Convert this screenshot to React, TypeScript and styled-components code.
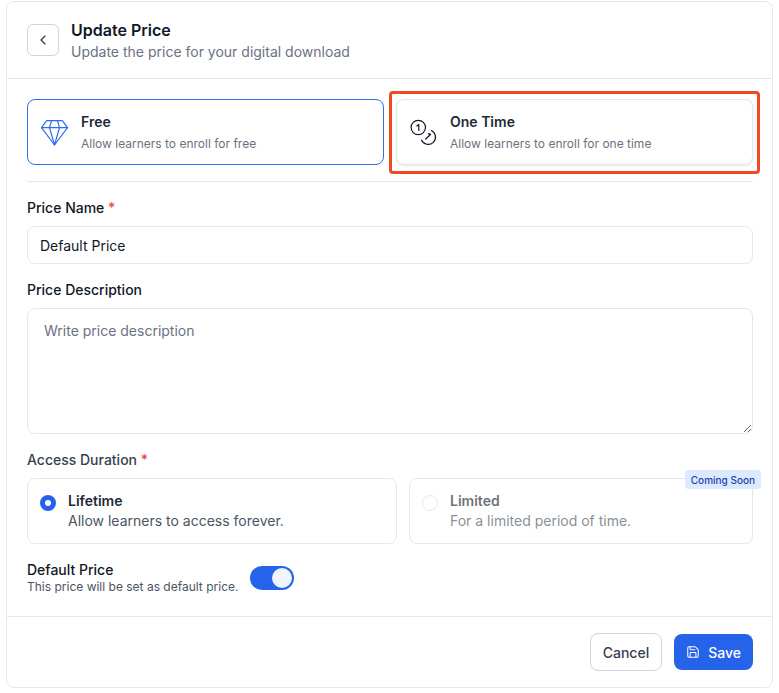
import React from "react";
import styled, { createGlobalStyle } from "styled-components";
import { ChevronLeft, Save } from "lucide-react";

const Global = createGlobalStyle`
  html, body { margin: 0; padding: 0; background: #fff; }
  * { box-sizing: border-box; }
  body { font-family: Inter, "Noto Sans", sans-serif; color: #111827; }
`;

const Page = styled.div`
  width: 779px;
  height: 693px;
  padding: 1px 6px 5px 6px;
`;

const Card = styled.div`
  width: 767px;
  height: 687px;
  border: 1px solid #e5e7eb;
  border-radius: 8px;
  background: #fff;
  display: flex;
  flex-direction: column;
`;

const Header = styled.header`
  height: 77px;
  flex: none;
  padding: 16px 20px 0;
  display: flex;
  gap: 12px;
  border-bottom: 1px solid #e5e7eb;
`;

const BackButton = styled.button`
  width: 32px;
  height: 32px;
  margin-top: 6px;
  padding: 0;
  border: 1px solid #d1d5db;
  border-radius: 6px;
  background: #fff;
  color: #374151;
  display: flex;
  align-items: center;
  justify-content: center;
`;

const HeaderText = styled.div`
  display: flex;
  flex-direction: column;
`;

const Title = styled.div`
  font-size: 16px;
  line-height: 24px;
  font-weight: 600;
  color: #111827;
`;

const Subtitle = styled.div`
  font-size: 14px;
  line-height: 20px;
  color: #6b7280;
`;

const Body = styled.div`
  flex: 1;
  padding: 20px 20px 0;
  display: flex;
  flex-direction: column;
`;

const TypeRow = styled.div`
  display: grid;
  grid-template-columns: 357px 357px;
  gap: 12px;
  padding-bottom: 16px;
  border-bottom: 1px solid #e5e7eb;
  width: 726px;
`;

const TypeCard = styled.div<{ $selected?: boolean }>`
  position: relative;
  height: 66px;
  padding: 0 13px;
  display: flex;
  align-items: center;
  gap: 12px;
  border-radius: 8px;
  background: #fff;
  border: 1px solid ${(p) => (p.$selected ? "#3070ee" : "#e5e7eb")};
  box-shadow: ${(p) => (p.$selected ? "none" : "0 1px 3px rgba(17,24,39,0.1)")};
`;

const Highlight = styled.div`
  position: absolute;
  left: -8px;
  top: -9px;
  width: 371px;
  height: 83px;
  border: 3px solid #f04a23;
  border-radius: 4px;
  pointer-events: none;
`;

const TypeIcon = styled.svg`
  flex: none;
  width: 28px;
  height: 28px;
`;

const TypeText = styled.div`
  display: flex;
  flex-direction: column;
  gap: 4px;
`;

const TypeTitle = styled.div`
  font-size: 14px;
  line-height: 20px;
  font-weight: 600;
  color: #1f2937;
`;

const TypeDesc = styled.div`
  font-size: 12px;
  line-height: 16px;
  color: #6b7280;
`;

const Label = styled.label<{ $muted?: boolean }>`
  display: block;
  font-size: 14px;
  line-height: 20px;
  font-weight: 500;
  color: ${(p) => (p.$muted ? "#374151" : "#111827")};
  margin: 16px 0 8px;
`;

const Required = styled.span`
  color: #ef4444;
`;

const TextInput = styled.input`
  display: block;
  width: 726px;
  height: 38px;
  padding: 0 12px;
  font: 400 14px Inter, sans-serif;
  color: #111827;
  border: 1px solid #e5e7eb;
  border-radius: 8px;
  outline: none;
`;

const TextArea = styled.textarea`
  display: block;
  width: 726px;
  height: 126px;
  padding: 12px 16px;
  font: 400 14px/20px Inter, sans-serif;
  border: 1px solid #e5e7eb;
  border-radius: 8px;
  outline: none;
  resize: vertical;
  &::placeholder { color: #6b7280; opacity: 1; }
`;

const DurationRow = styled.div`
  display: grid;
  grid-template-columns: 370px 344px;
  gap: 12px;
`;

const DurationCard = styled.div`
  position: relative;
  height: 66px;
  padding: 12px;
  display: flex;
  gap: 12px;
  border: 1px solid #e5e7eb;
  border-radius: 8px;
`;

const Radio = styled.span<{ $checked?: boolean }>`
  flex: none;
  width: 16px;
  height: 16px;
  margin-top: 4px;
  border-radius: 50%;
  background: #fff;
  border: ${(p) => (p.$checked ? "5px solid #2563eb" : "1px solid #e5e7eb")};
`;

const DurationText = styled.div<{ $disabled?: boolean }>`
  display: flex;
  flex-direction: column;
  opacity: ${(p) => (p.$disabled ? 0.65 : 1)};
`;

const DurationTitle = styled.div`
  font-size: 14px;
  line-height: 20px;
  font-weight: 600;
  color: #1f2937;
`;

const DurationDesc = styled.div`
  font-size: 14px;
  line-height: 20px;
  color: #4b5563;
`;

const Badge = styled.span`
  position: absolute;
  right: -9px;
  top: -9px;
  height: 19px;
  padding: 0 6px;
  display: flex;
  align-items: center;
  font-size: 10px;
  font-weight: 500;
  color: #1e40af;
  background: #dbeafe;
  border-radius: 4px;
`;

const SwitchRow = styled.div`
  display: flex;
  align-items: center;
  gap: 12px;
  margin-top: 17px;
`;

const SwitchText = styled.div`
  display: flex;
  flex-direction: column;
`;

const SwitchTitle = styled.div`
  font-size: 14px;
  line-height: 18px;
  font-weight: 500;
  color: #111827;
`;

const SwitchDesc = styled.div`
  font-size: 12px;
  line-height: 16px;
  color: #4b5563;
`;

const Toggle = styled.span`
  width: 44px;
  height: 24px;
  padding: 2px;
  display: flex;
  justify-content: flex-end;
  background: #2563eb;
  border-radius: 12px;
`;

const Knob = styled.span`
  width: 20px;
  height: 20px;
  border-radius: 50%;
  background: #eff4fe;
`;

const Footer = styled.footer`
  flex: none;
  height: 71px;
  padding: 16px 19px 0 20px;
  display: flex;
  justify-content: flex-end;
  gap: 12px;
  border-top: 1px solid #e5e7eb;
`;

const Button = styled.button<{ $primary?: boolean }>`
  height: ${(p) => (p.$primary ? "36px" : "38px")};
  margin-top: ${(p) => (p.$primary ? "1px" : "0")};
  padding: 0 12px;
  display: flex;
  align-items: center;
  gap: 8px;
  font: 500 14px Inter, sans-serif;
  border-radius: 8px;
  color: ${(p) => (p.$primary ? "#fff" : "#374151")};
  background: ${(p) => (p.$primary ? "#2563eb" : "#fff")};
  border: ${(p) => (p.$primary ? "none" : "1px solid #d1d5db")};
`;

const Diamond = () => (
  <TypeIcon viewBox="0 0 28 28" fill="none" stroke="#2f6bee" strokeWidth="1.2" strokeLinejoin="round" strokeLinecap="round">
    <path d="M5.7 2.7H21.3L26.5 9.7 13.5 27 .5 9.7z" />
    <path d="M.5 9.7H26.5M8.5 9.7 13.5 27 18.5 9.7M8.5 9.7 10.5 2.7M18.5 9.7 16.5 2.7" />
  </TypeIcon>
);

const Coins = () => (
  <TypeIcon viewBox="0 0 28 28" fill="none" stroke="#111827" strokeWidth="1.2" strokeLinecap="round" strokeLinejoin="round">
    <circle cx="8.3" cy="9.5" r="7.2" />
    <path d="M6.8 8 8.8 6.5v6" />
    <path d="M21.3 12.5a7.3 7.3 0 1 1-9.8 9.5" />
    <path d="M15.7 21 20.7 16.3 18.3 15.6" />
  </TypeIcon>
);

export default function App() {
  return (
    <>
      <Global />
      <Page>
        <Card>
          <Header>
            <BackButton aria-label="Back">
              <ChevronLeft size={16} strokeWidth={2} />
            </BackButton>
            <HeaderText>
              <Title>Update Price</Title>
              <Subtitle>Update the price for your digital download</Subtitle>
            </HeaderText>
          </Header>
          <Body>
            <TypeRow>
              <TypeCard $selected>
                <Diamond />
                <TypeText>
                  <TypeTitle>Free</TypeTitle>
                  <TypeDesc>Allow learners to enroll for free</TypeDesc>
                </TypeText>
              </TypeCard>
              <TypeCard>
                <Coins />
                <TypeText>
                  <TypeTitle>One Time</TypeTitle>
                  <TypeDesc>Allow learners to enroll for one time</TypeDesc>
                </TypeText>
                <Highlight />
              </TypeCard>
            </TypeRow>
            <Label>
              Price Name <Required>*</Required>
            </Label>
            <TextInput defaultValue="Default Price" />
            <Label>Price Description</Label>
            <TextArea placeholder="Write price description" />
            <Label $muted>
              Access Duration <Required>*</Required>
            </Label>
            <DurationRow>
              <DurationCard>
                <Radio $checked />
                <DurationText>
                  <DurationTitle>Lifetime</DurationTitle>
                  <DurationDesc>Allow learners to access forever.</DurationDesc>
                </DurationText>
              </DurationCard>
              <DurationCard>
                <Radio />
                <DurationText $disabled>
                  <DurationTitle>Limited</DurationTitle>
                  <DurationDesc>For a limited period of time.</DurationDesc>
                </DurationText>
                <Badge>Coming Soon</Badge>
              </DurationCard>
            </DurationRow>
            <SwitchRow>
              <SwitchText>
                <SwitchTitle>Default Price</SwitchTitle>
                <SwitchDesc>This price will be set as default price.</SwitchDesc>
              </SwitchText>
              <Toggle>
                <Knob />
              </Toggle>
            </SwitchRow>
          </Body>
          <Footer>
            <Button>Cancel</Button>
            <Button $primary>
              <Save size={14} strokeWidth={1.75} />
              Save
            </Button>
          </Footer>
        </Card>
      </Page>
    </>
  );
}
